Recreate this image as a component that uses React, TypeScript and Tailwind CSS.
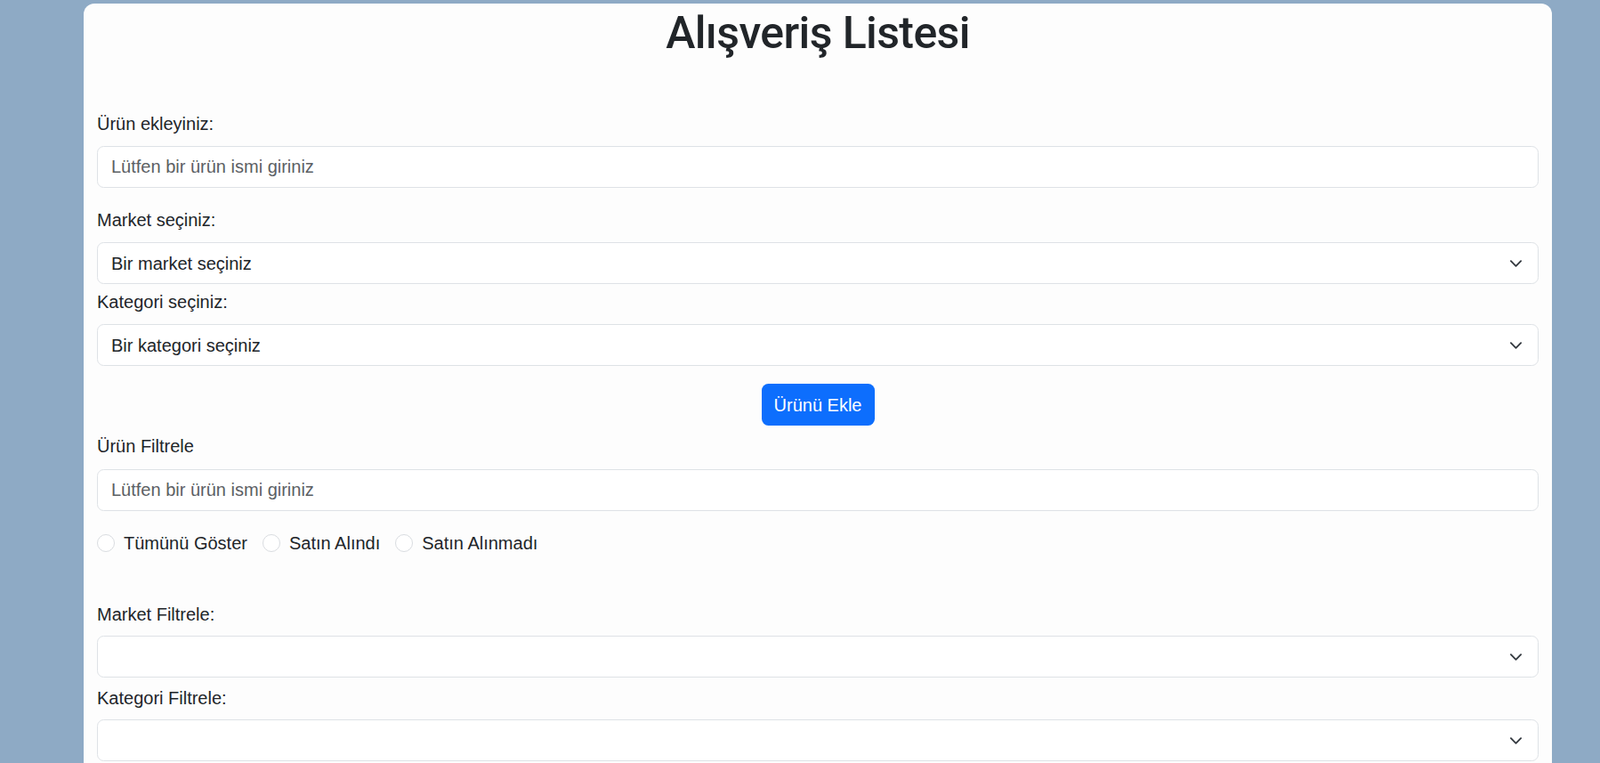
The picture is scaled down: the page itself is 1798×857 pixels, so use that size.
import React from "react";

function Chevron() {
  return (
    <svg
      className="pointer-events-none absolute right-[18px] top-1/2 -translate-y-1/2"
      width="15"
      height="15"
      viewBox="0 0 16 16"
      fill="none"
    >
      <path d="m2 5 6 6 6-6" stroke="#343a40" strokeWidth="2" strokeLinecap="round" strokeLinejoin="round" />
    </svg>
  );
}

function Select({ text, className = "" }: { text?: string; className?: string }) {
  return (
    <div className={"relative " + className}>
      <select
        defaultValue=""
        className="block h-[47px] w-full appearance-none rounded-[7.5px] border border-[#dee2e6] bg-white pl-[15px] pr-[50px] text-[20px] text-[#212529] outline-none"
      >
        <option value="">{text ?? ""}</option>
      </select>
      <Chevron />
    </div>
  );
}

function TextInput({ className = "" }: { className?: string }) {
  return (
    <input
      type="text"
      placeholder="Lütfen bir ürün ismi giriniz"
      className={
        "block h-[47px] w-full rounded-[7.5px] border border-[#dee2e6] bg-white px-[15px] text-[20px] text-[#212529] outline-none placeholder:text-[#5c6064] " +
        className
      }
    />
  );
}

function Label({ children, className = "" }: { children: React.ReactNode; className?: string }) {
  return <label className={"block h-[30px] leading-[30px] text-[20px] text-[#212529] " + className}>{children}</label>;
}

function Radio({ label }: { label: string }) {
  return (
    <label className="flex items-center gap-[10px] h-[30px] text-[20px] leading-[30px] text-[#212529]">
      <input
        type="radio"
        name="durum"
        className="m-0 h-[20px] w-[20px] appearance-none rounded-full border border-[#d9dce0] bg-white"
      />
      <span>{label}</span>
    </label>
  );
}

export default function App() {
  return (
    <div className="min-h-screen bg-[#8eaac5] font-['Liberation_Sans',Arial,sans-serif] pt-[4px] overflow-hidden">
      <div className="ml-[94px] w-[1650px] rounded-t-[12px] bg-[#fdfdfd] px-[15px] pt-[3px] pb-[40px] min-h-[900px]">
        <h1 className="mb-[57px] h-[60px] text-center font-['Roboto',sans-serif] text-[50px] leading-[60px] font-medium tracking-[-0.6px] text-[#212529]">
          Alışveriş Listesi
        </h1>

        <Label className="mb-[10px]">Ürün ekleyiniz:</Label>
        <TextInput className="mb-[21px]" />

        <Label className="mb-[10px]">Market seçiniz:</Label>
        <Select text="Bir market seçiniz" className="mb-[5px]" />

        <Label className="mb-[10px]">Kategori seçiniz:</Label>
        <Select text="Bir kategori seçiniz" className="mb-[20px]" />

        <div className="mb-[8px] flex justify-center">
          <button className="h-[47px] w-[127px] rounded-[7.5px] bg-[#0d6efd] text-[20px] text-white">Ürünü Ekle</button>
        </div>

        <Label className="mb-[11px]">Ürün Filtrele</Label>
        <TextInput className="mb-[21px]" />

        <div className="mb-[50px] flex items-center gap-[17px]">
          <Radio label="Tümünü Göster" />
          <Radio label="Satın Alındı" />
          <Radio label="Satın Alınmadı" />
        </div>

        <Label className="mb-[9px]">Market Filtrele:</Label>
        <Select className="mb-[8px]" />

        <Label className="mb-[9px]">Kategori Filtrele:</Label>
        <Select />
      </div>
    </div>
  );
}
